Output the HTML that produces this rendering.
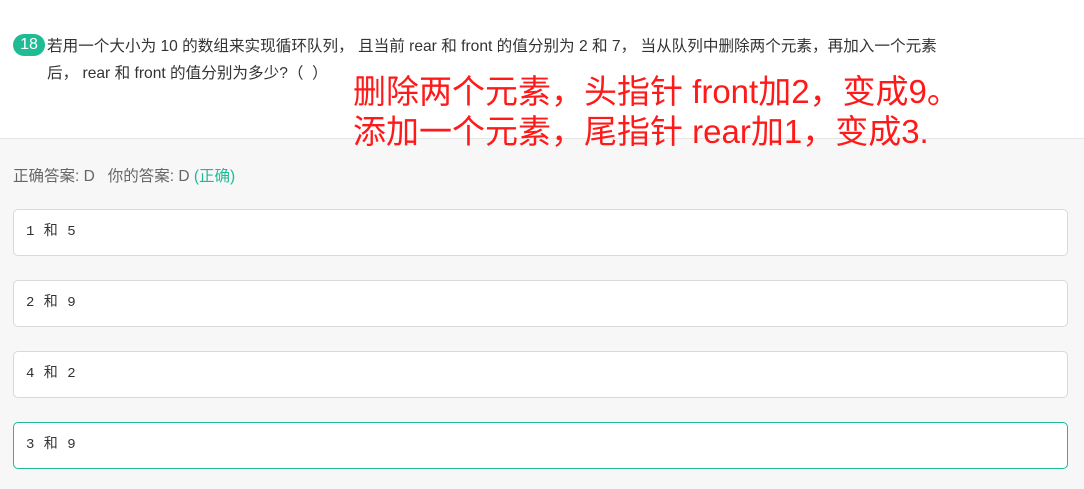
<!DOCTYPE html>
<html><head><meta charset="utf-8"><style>
body{margin:0;width:1084px;height:489px;background:#f7f7f7;font-family:"Liberation Sans","Noto Sans CJK SC",sans-serif;overflow:hidden;position:relative}
.top{position:absolute;left:0;top:0;width:1084px;height:138px;background:#fff;border-bottom:1px solid #e6e6e6}
.badge{position:absolute;left:13px;top:34px;width:32px;height:22px;border-radius:11px;background:#1fbb94;color:#fff;font-size:16px;line-height:22px;text-align:center}
.q{position:absolute;left:47px;top:33px;font-size:15.6px;color:#333;line-height:27px;width:1000px;white-space:nowrap}
.red{position:absolute;left:353px;top:72px;font-size:33px;color:#ff1a1a;line-height:40px;white-space:nowrap}
.ans{position:absolute;left:13px;top:164px;font-size:15.5px;color:#666}
.ans span{color:#1fbb94}
.opt{position:absolute;left:13px;height:45px;background:#fff;border:1px solid #d9d9d9;border-radius:5px;font-family:"Liberation Mono","Noto Sans CJK SC",monospace;font-size:14px;color:#333;line-height:45px;padding-left:12px;width:1041px;word-spacing:1px}
</style></head><body>
<div class="top">
<div class="badge">18</div>
<div class="q">若用一个大小为 10 的数组来实现循环队列， 且当前 rear 和 front 的值分别为 2 和 7， 当从队列中删除两个元素，再加入一个元素<br>后， rear 和 front 的值分别为多少?（ &nbsp;）</div>
<div class="red">删除两个元素，头指针 front加2，变成9。<br>添加一个元素，尾指针 rear加1，变成3.</div>
</div>
<div class="ans">正确答案: D &nbsp; 你的答案: D <span>(正确)</span></div>
<div class="opt" style="top:209px">1 和 5</div>
<div class="opt" style="top:280px">2 和 9</div>
<div class="opt" style="top:351px">4 和 2</div>
<div class="opt" style="top:422px;border-color:#1fbb94">3 和 9</div>
</body></html>
